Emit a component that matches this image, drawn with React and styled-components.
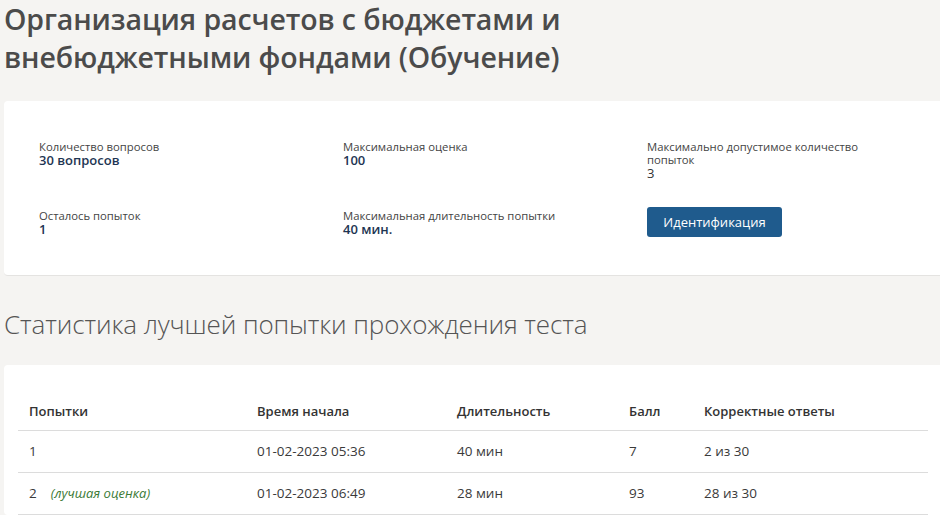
import React from 'react'
import styled, { createGlobalStyle } from 'styled-components'

const GlobalStyle = createGlobalStyle`
    html, body {
        margin: 0;
        padding: 0;
        background: #f5f4f2;
        overflow: hidden;
    }
    body {
        font-family: "Open Sans", "Noto Sans", sans-serif;
        color: #333;
    }
`

const Page = styled.div`
    width: 940px;
    padding-left: 4px;
    box-sizing: border-box;
`

const Title = styled.h1`
    margin: 0;
    font-size: 28.5px;
    line-height: 38px;
    font-weight: 600;
    color: #4b4b4b;
    letter-spacing: -0.1px;
`

const InfoCard = styled.div`
    margin-top: 25px;
    background: #fff;
    border-radius: 4px 0 0 4px;
    border-bottom: 1px solid #e4e3e1;
    padding: 39px 0 38px 35px;
    display: grid;
    grid-template-columns: 304px 304px 1fr;
    row-gap: 26px;
`

const Field = styled.div`
    display: flex;
    flex-direction: column;
    padding-top: ${p => p.$offset || 0}px;
`

const Label = styled.div`
    font-size: 11.3px;
    line-height: 13px;
    color: #444;
    max-width: 230px;
`

const Value = styled.div`
    font-size: 13px;
    line-height: 15px;
    font-weight: ${p => p.$light ? 400 : 600};
    color: ${p => p.$light ? '#333' : '#1e3553'};
`

const Button = styled.button`
    width: 135px;
    height: 30px;
    border: none;
    border-radius: 3px;
    background: #1f5b8d;
    color: #fff;
    font-family: "Open Sans", "Noto Sans", sans-serif;
    font-size: 13px;
    font-weight: 500;
    cursor: pointer;
`

const SectionTitle = styled.h2`
    margin: 30px 0 0;
    font-size: 26px;
    line-height: 36px;
    font-weight: 300;
    color: #555;
    letter-spacing: -0.1px;
`

const TableCard = styled.div`
    margin-top: 23px;
    background: #fff;
    border-radius: 4px 0 0 4px;
    padding: 25px 0 0 14px;
`

const Table = styled.table`
    width: 910px;
    border-collapse: collapse;
    table-layout: fixed;
    font-size: 13.5px;
    color: #333;
`

const Th = styled.th`
    box-sizing: border-box;
    width: ${p => p.$w}px;
    text-align: left;
    font-size: 13px;
    font-weight: 600;
    height: 40px;
    padding: 2px 0 0 11px;
    border-bottom: 1px solid #dcdcdc;
`

const Td = styled.td`
    height: 41px;
    padding: 0 0 0 11px;
    border-bottom: 1px solid #dcdcdc;
    color: #3a3a3a;
`

const Best = styled.em`
    margin-left: 14px;
    color: #3b7a35;
    font-size: 13px;
`

const columns = [
    { title: 'Попытки', w: 228 },
    { title: 'Время начала', w: 200 },
    { title: 'Длительность', w: 172 },
    { title: 'Балл', w: 75 },
    { title: 'Корректные ответы', w: 235 },
]

const attempts = [
    { n: 1, start: '01-02-2023 05:36', duration: '40 мин', score: 7, correct: '2 из 30' },
    { n: 2, start: '01-02-2023 06:49', duration: '28 мин', score: 93, correct: '28 из 30', best: true },
]

export default function App() {
    return (
        <Page>
            <GlobalStyle />
            <Title>Организация расчетов с бюджетами и<br />внебюджетными фондами (Обучение)</Title>
            <InfoCard>
                <Field>
                    <Label>Количество вопросов</Label>
                    <Value>30 вопросов</Value>
                </Field>
                <Field>
                    <Label>Максимальная оценка</Label>
                    <Value>100</Value>
                </Field>
                <Field>
                    <Label>Максимально допустимое количество попыток</Label>
                    <Value $light>3</Value>
                </Field>
                <Field $offset={2}>
                    <Label>Осталось попыток</Label>
                    <Value>1</Value>
                </Field>
                <Field $offset={2}>
                    <Label>Максимальная длительность попытки</Label>
                    <Value>40 мин.</Value>
                </Field>
                <Field>
                    <Button>Идентификация</Button>
                </Field>
            </InfoCard>
            <SectionTitle>Статистика лучшей попытки прохождения теста</SectionTitle>
            <TableCard>
                <Table>
                    <thead>
                        <tr>{columns.map(c => <Th key={c.title} $w={c.w}>{c.title}</Th>)}</tr>
                    </thead>
                    <tbody>
                        {attempts.map(a => (
                            <tr key={a.n}>
                                <Td>{a.n}{a.best && <Best>(лучшая оценка)</Best>}</Td>
                                <Td>{a.start}</Td>
                                <Td>{a.duration}</Td>
                                <Td>{a.score}</Td>
                                <Td>{a.correct}</Td>
                            </tr>
                        ))}
                    </tbody>
                </Table>
            </TableCard>
        </Page>
    )
}
